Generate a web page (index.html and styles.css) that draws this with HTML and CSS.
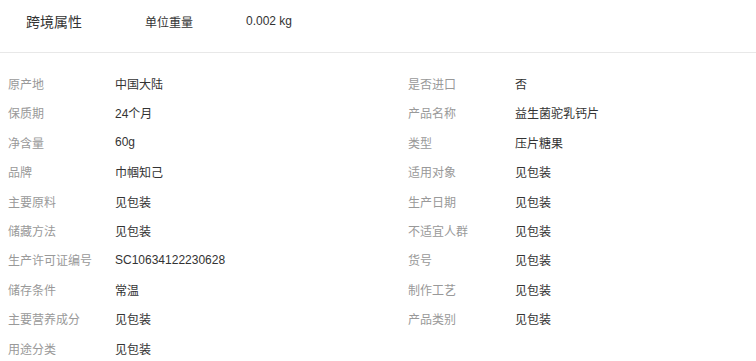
FILE: index.html
```html
<!DOCTYPE html>
<html lang="zh-CN">
<head>
<meta charset="utf-8">
<link rel="stylesheet" href="styles.css">
</head>
<body>
<div class="header">
  <div class="title">跨境属性</div>
  <div class="hkey">单位重量</div>
  <div class="hval">0.002 kg</div>
</div>
<div class="attrs">
  <div class="item"><span class="k">原产地</span><span class="v">中国大陆</span></div>
  <div class="item"><span class="k">是否进口</span><span class="v">否</span></div>
  <div class="item"><span class="k">保质期</span><span class="v">24个月</span></div>
  <div class="item"><span class="k">产品名称</span><span class="v">益生菌驼乳钙片</span></div>
  <div class="item"><span class="k">净含量</span><span class="v">60g</span></div>
  <div class="item"><span class="k">类型</span><span class="v">压片糖果</span></div>
  <div class="item"><span class="k">品牌</span><span class="v">巾帼知己</span></div>
  <div class="item"><span class="k">适用对象</span><span class="v">见包装</span></div>
  <div class="item"><span class="k">主要原料</span><span class="v">见包装</span></div>
  <div class="item"><span class="k">生产日期</span><span class="v">见包装</span></div>
  <div class="item"><span class="k">储藏方法</span><span class="v">见包装</span></div>
  <div class="item"><span class="k">不适宜人群</span><span class="v">见包装</span></div>
  <div class="item"><span class="k">生产许可证编号</span><span class="v">SC10634122230628</span></div>
  <div class="item"><span class="k">货号</span><span class="v">见包装</span></div>
  <div class="item"><span class="k">储存条件</span><span class="v">常温</span></div>
  <div class="item"><span class="k">制作工艺</span><span class="v">见包装</span></div>
  <div class="item"><span class="k">主要营养成分</span><span class="v">见包装</span></div>
  <div class="item"><span class="k">产品类别</span><span class="v">见包装</span></div>
  <div class="item"><span class="k">用途分类</span><span class="v">见包装</span></div>
</div>
</body>
</html>
```
FILE: styles.css
```css
html, body {
  margin: 0;
  padding: 0;
  background: #fff;
}
body {
  font-family: "Liberation Sans", "Noto Sans CJK SC", sans-serif;
  font-size: 12px;
  color: #333;
  overflow: hidden;
}
.header {
  display: flex;
  align-items: center;
  height: 42px;
  padding: 0 0 10px 26px;
  border-bottom: 1px solid #e8e8e8;
}
.title {
  font-size: 14px;
  width: 119px;
}
.hkey {
  width: 101px;
}
.attrs {
  display: grid;
  grid-template-columns: 400px 1fr;
  grid-auto-rows: 29.44px;
  padding: 15.6px 0 0 8px;
}
.item {
  display: flex;
  align-items: center;
  min-width: 0;
}
.k {
  width: 107px;
  flex: none;
  color: #999;
}
.v {
  color: #333;
  white-space: nowrap;
}
```
